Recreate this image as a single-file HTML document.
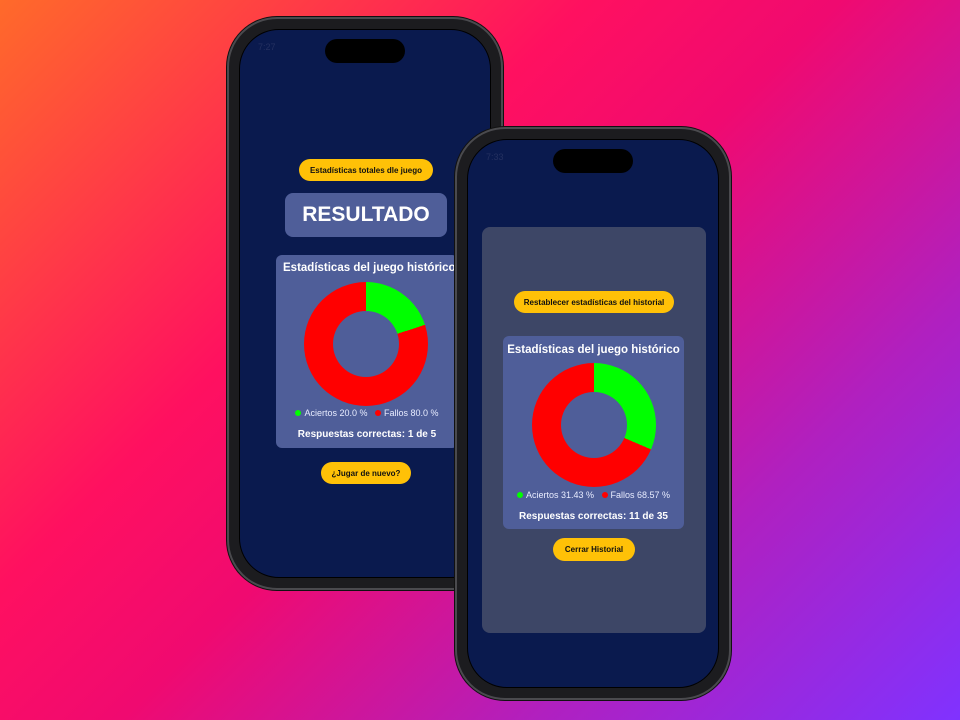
<!DOCTYPE html>
<html><head><meta charset="utf-8"><style>
*{margin:0;padding:0;box-sizing:border-box}
body{width:960px;height:720px;overflow:hidden;position:relative;font-family:"Liberation Sans",sans-serif;
background:linear-gradient(135deg,#ff6a2a 0%,#ff1060 35%,#f00a70 50%,#b020c0 75%,#8032ff 100%)}
.phone{position:absolute;width:276px;height:573px;border-radius:50px;background:#1c1c1f;border:2px solid #4a4a4e;box-shadow:0 0 0 1px #111}
.screen{position:absolute;left:10px;top:10px;right:10px;bottom:10px;border-radius:40px;background:#0a1a4e;overflow:hidden;border:1px solid #000}
.island{position:absolute;left:50%;top:9px;width:80px;height:24px;margin-left:-40px;background:#000;border-radius:12px}
.time{position:absolute;left:18px;top:12px;font-size:9px;color:#243060}
.abs{position:absolute}
.btn{position:absolute;background:#ffc107;border-radius:12px;color:#111;font-size:8px;font-weight:bold;display:flex;align-items:center;justify-content:center}
.card{position:absolute;background:#4f5e99;border-radius:6px;color:#fff}
.donut{position:absolute;width:124px;height:124px;border-radius:50%}
.donut::after{content:"";position:absolute;left:29px;top:29px;width:66px;height:66px;border-radius:50%;background:#4f5e99}
.t{position:absolute;width:100%;text-align:center;white-space:nowrap}
.dot{display:inline-block;width:6px;height:6px;border-radius:50%;margin-right:3px}
</style></head><body>

<div class="phone" style="left:227px;top:17px">
 <div class="screen">
  <div class="island"></div><div class="time">7:27</div>
  <div class="btn" style="left:59px;top:129px;width:134px;height:22px">Estadísticas totales dle juego</div>
  <div class="card" style="left:45px;top:163px;width:162px;height:44px;border-radius:8px;font-size:21px;font-weight:bold;display:flex;align-items:center;justify-content:center">RESULTADO</div>
  <div class="card" style="left:36px;top:225px;width:182px;height:193px">
   <div class="t" style="top:7px;font-size:11.5px;font-weight:bold;text-align:left;left:7px">Estadísticas del juego histórico</div>
   <div class="donut" style="left:28px;top:27px;background:conic-gradient(#00ff00 0 20%,#ff0000 20% 100%)"></div>
   <div class="t" style="top:153px;font-size:9px;color:#e8ecff"><span class="dot" style="background:#0f0"></span>Aciertos 20.0 % &nbsp; <span class="dot" style="background:#f00"></span>Fallos 80.0 %</div>
   <div class="t" style="top:174px;font-size:10px;font-weight:bold">Respuestas correctas: 1 de 5</div>
  </div>
  <div class="btn" style="left:81px;top:432px;width:90px;height:22px">¿Jugar de nuevo?</div>
 </div>
</div>

<div class="phone" style="left:455px;top:127px">
 <div class="screen">
  <div class="island"></div><div class="time">7:33</div>
  <div class="abs" style="left:14px;top:87px;width:224px;height:406px;background:#3d4666;border-radius:8px">
   <div class="btn" style="left:32px;top:64px;width:160px;height:22px">Restablecer estadísticas del historial</div>
   <div class="card" style="left:21px;top:109px;width:181px;height:193px">
    <div class="t" style="top:8px;font-size:11.5px;font-weight:bold">Estadísticas del juego histórico</div>
    <div class="donut" style="left:29px;top:27px;background:conic-gradient(#00ff00 0 31.43%,#ff0000 31.43% 100%)"></div>
    <div class="t" style="top:154px;font-size:9px;color:#e8ecff"><span class="dot" style="background:#0f0"></span>Aciertos 31.43 % &nbsp; <span class="dot" style="background:#f00"></span>Fallos 68.57 %</div>
    <div class="t" style="top:175px;font-size:10px;font-weight:bold">Respuestas correctas: 11 de 35</div>
   </div>
   <div class="btn" style="left:71px;top:311px;width:82px;height:23px">Cerrar Historial</div>
  </div>
 </div>
</div>
</body></html>
